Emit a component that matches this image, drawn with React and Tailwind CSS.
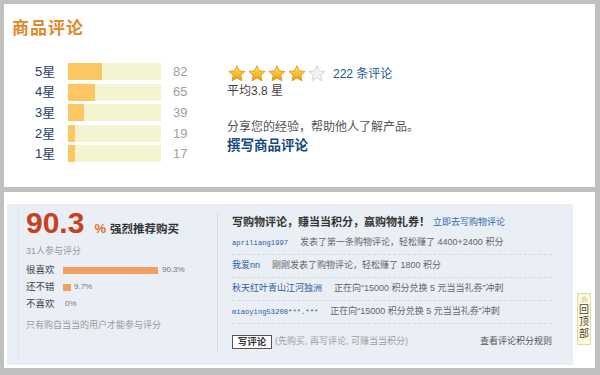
import React from 'react';

const FONT = { fontFamily: '"Liberation Sans", "Noto Sans CJK SC", sans-serif' };

const starRows = [
  { label: '5星', fill: 34, count: 82 },
  { label: '4星', fill: 27, count: 65 },
  { label: '3星', fill: 16, count: 39 },
  { label: '2星', fill: 7, count: 19 },
  { label: '1星', fill: 7, count: 17 },
];

const feed = [
  { name: 'apriliang1997', mono: true, text: '发表了第一条购物评论，轻松赚了 4400+2400 积分' },
  { name: '我爱nn', mono: false, text: '刚刚发表了购物评论，轻松赚了 1800 积分' },
  { name: '秋天红叶青山江河独洲', mono: false, text: '正在向“15000 积分兑换 5 元当当礼券”冲刺' },
  { name: 'miaoying53208***.***', mono: true, text: '正在向“15000 积分兑换 5 元当当礼券”冲刺' },
];

const STAR = 'M12 2l2.9 6.26 6.86.73-5.13 4.63 1.45 6.76L12 16.9l-6.08 3.48 1.45-6.76L2.24 8.99l6.86-.73L12 2z';

const Star = ({ on }) => (
  <svg viewBox="0 0 24 23" className="w-[20px] h-[19px]">
    <defs>
      <linearGradient id="gold" x1="0" y1="0" x2="0" y2="1">
        <stop offset="0" stopColor="#fde58a" />
        <stop offset="0.5" stopColor="#f6c12f" />
        <stop offset="1" stopColor="#e79a12" />
      </linearGradient>
    </defs>
    <path
      d={STAR}
      fill={on ? 'url(#gold)' : '#f1f1f1'}
      stroke={on ? '#d8901a' : '#cfcfcf'}
      strokeWidth="1"
      strokeLinejoin="round"
    />
  </svg>
);

export default function App() {
  return (
    <div className="w-[600px] h-[375px] bg-[#c0c0c0] pt-[4px] pl-[4px] pr-[5px] flex flex-col" style={FONT}>
      {/* 商品评论 */}
      <div className="bg-white h-[183px] pl-[8px] pt-[15px]">
        <h2 className="text-[17px] leading-[20px] font-bold text-[#e08a2c] tracking-[1px]">商品评论</h2>

        <div className="flex mt-[24px]">
          <div className="ml-[23px] flex flex-col gap-[3.6px]">
            {starRows.map((r) => (
              <div key={r.label} className="flex items-center h-[17px]">
                <span className="w-[33px] text-[13px] text-[#1d3f73]">{r.label}</span>
                <div className="w-[93px] h-[17px] bg-[#f4f4d0] flex">
                  <div className="h-full bg-[#fcc763]" style={{ width: r.fill }} />
                </div>
                <span className="w-[20px] ml-[12px] text-[13px] text-[#a0a0a0]">{r.count}</span>
              </div>
            ))}
          </div>

          <div className="ml-[34px] mt-[1px] flex flex-col">
            <div className="flex items-center">
              {[1, 1, 1, 1, 0].map((on, i) => (
                <Star key={i} on={on} />
              ))}
              <a className="ml-[6px] text-[12px] text-[#1d5794]">222 条评论</a>
            </div>
            <div className="text-[12px] leading-[14px] text-[#444] mt-[1px]">平均3.8 星</div>
            <div className="text-[12px] leading-[14px] text-[#555] mt-[22px]">分享您的经验，帮助他人了解产品。</div>
            <a className="text-[13.5px] leading-[16px] font-bold text-[#17497c] mt-[4px]">撰写商品评论</a>
          </div>
        </div>
      </div>

      {/* 推荐购买 / 购物评论 */}
      <div className="bg-white h-[176px] mt-[5px] pt-[12px] pl-[3px] pb-[3px] flex">
        <div className="flex-1 bg-[#eaeef5] flex">
          <div className="w-[210px] pl-[11px] pt-[4px]">
            <div className="border-l border-[#e1e6ee] pl-[7px] h-full">
              <div className="flex items-baseline">
                <span className="text-[30px] leading-[30px] font-bold text-[#c9411b]">90.3</span>
                <span className="ml-[10px] text-[13px] font-bold text-[#e0702a]">%</span>
                <span className="ml-[4px] text-[11.5px] font-bold text-[#333]">强烈推荐购买</span>
              </div>
              <div className="mt-[6px] text-[9px] leading-[12px] text-[#9a9a9a]">31人参与评分</div>

              <div className="mt-[5px] flex flex-col text-[9.5px] text-[#444]">
                <div className="h-[17px] flex items-center">
                  <span className="w-[37px]">很喜欢</span>
                  <div className="w-[95px] h-[7px] bg-[#f3a062]" />
                  <span className="ml-[4px] text-[8px] text-[#777]">90.3%</span>
                </div>
                <div className="h-[17px] flex items-center">
                  <span className="w-[37px]">还不错</span>
                  <div className="w-[8px] h-[7px] bg-[#f3a062]" />
                  <span className="ml-[3px] text-[8px] text-[#777]">9.7%</span>
                </div>
                <div className="h-[17px] flex items-center">
                  <span className="w-[39px]">不喜欢</span>
                  <span className="text-[8px] text-[#777]">0%</span>
                </div>
              </div>
              <div className="mt-[6px] text-[9px] leading-[12px] text-[#9a9a9a]">只有购自当当的用户才能参与评分</div>
            </div>
          </div>

          <div className="flex-1 mt-[9px] mb-[12px] border-l border-[#d3d8e0] pl-[14px] pr-[21px] flex flex-col">
            <div className="h-[19px] flex items-center">
              <span className="text-[11px] font-bold text-[#333]">写购物评论，赚当当积分，赢购物礼券！</span>
              <a className="ml-[3px] text-[9px] text-[#3267a8]">立即去写购物评论</a>
            </div>
            {feed.map((f) => (
              <div key={f.name} className="h-[23px] flex items-center border-b border-dashed border-[#d6d9de]">
                <a
                  className={f.mono ? 'text-[7.2px] text-[#2d5f9c]' : 'text-[9px] text-[#2d5f9c]'}
                  style={f.mono ? { fontFamily: '"Liberation Mono", monospace' } : undefined}
                >
                  {f.name}
                </a>
                <span className="ml-[12px] text-[9px] text-[#666]">{f.text}</span>
              </div>
            ))}
            <div className="mt-[11px] flex items-center">
              <button className="w-[40px] h-[14px] bg-white border border-[#555] text-[9.5px] font-bold text-[#333] leading-[12px]">
                写评论
              </button>
              <span className="ml-[3px] text-[9px] text-[#a0a0a0]">(先购买, 再写评论, 可赚当当积分)</span>
              <a className="ml-auto text-[9px] text-[#555]">查看评论积分规则</a>
            </div>
          </div>
        </div>

        <div className="w-[22px] pl-[4px] pt-[89px]">
          <div className="w-[14px] h-[52px] bg-[#fcf8dc] border border-[#e6dba4] pt-[2px] text-[#444] text-center">
            <svg viewBox="0 0 8 8" className="w-[7px] h-[7px] mx-auto" fill="none" stroke="#aaa" strokeWidth="1">
              <path d="M1 4l3-3 3 3M1 7l3-3 3 3" />
            </svg>
            <div className="text-[10px] leading-[12px] mt-[1px]">回</div>
            <div className="text-[10px] leading-[12px]">顶</div>
            <div className="text-[10px] leading-[12px]">部</div>
          </div>
        </div>
      </div>
    </div>
  );
}
